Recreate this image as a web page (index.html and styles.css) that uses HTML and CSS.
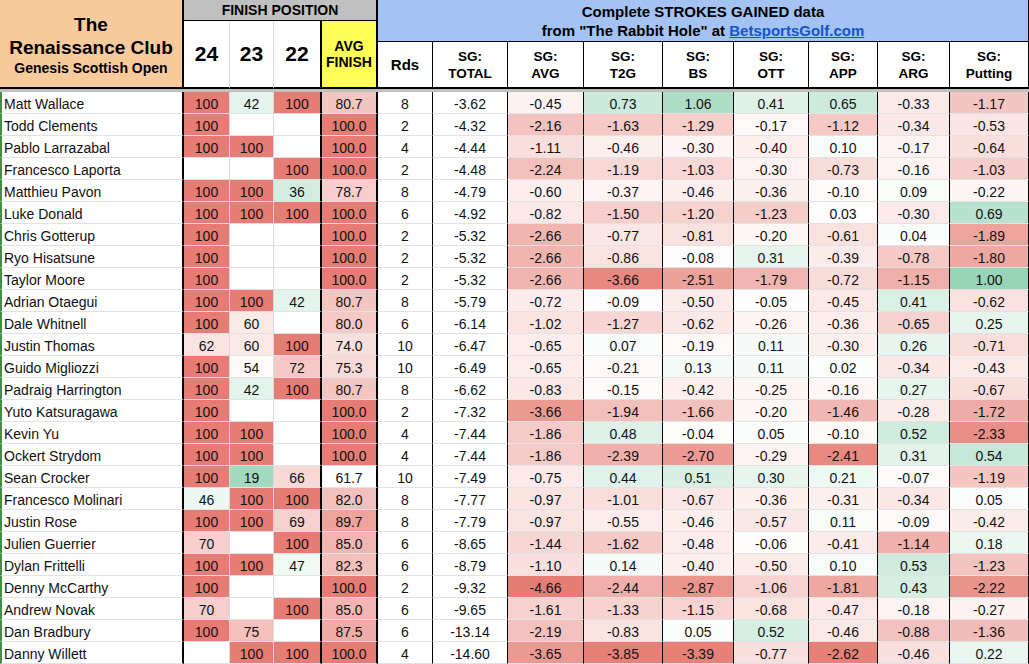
FILE: index.html
```html
<!DOCTYPE html>
<html lang="en">
<head>
<meta charset="utf-8">
<title>The Renaissance Club - Strokes Gained</title>
<link rel="stylesheet" href="styles.css">
</head>
<body>
<div class="sheet">
  <div class="head">
    <div class="title">
      <div class="t1">The</div>
      <div class="t1">Renaissance Club</div>
      <div class="t2">Genesis Scottish Open</div>
    </div>
    <div class="fp">FINISH POSITION</div>
    <div class="band">
      <div>Complete STROKES GAINED data</div>
      <div>from "The Rabbit Hole" at <a href="#">BetsportsGolf.com</a></div>
    </div>
    <div class="yr">24</div>
    <div class="yr">23</div>
    <div class="yr y22">22</div>
    <div class="avgh">AVG<br>FINISH</div>
    <div class="sgh rds">Rds</div>
    <div class="sgh">SG:<br>TOTAL</div>
    <div class="sgh">SG:<br>AVG</div>
    <div class="sgh">SG:<br>T2G</div>
    <div class="sgh">SG:<br>BS</div>
    <div class="sgh">SG:<br>OTT</div>
    <div class="sgh">SG:<br>APP</div>
    <div class="sgh">SG:<br>ARG</div>
    <div class="sgh">SG:<br>Putting</div>
  </div>
  <div class="freeze"></div>
  <div class="rows">
    <div class="row"><div>Matt Wallace</div><div>100</div><div>42</div><div>100</div><div>80.7</div><div>8</div><div>-3.62</div><div>-0.45</div><div>0.73</div><div>1.06</div><div>0.41</div><div>0.65</div><div>-0.33</div><div>-1.17</div></div>
    <div class="row"><div>Todd Clements</div><div>100</div><div></div><div></div><div>100.0</div><div>2</div><div>-4.32</div><div>-2.16</div><div>-1.63</div><div>-1.29</div><div>-0.17</div><div>-1.12</div><div>-0.34</div><div>-0.53</div></div>
    <div class="row"><div>Pablo Larrazabal</div><div>100</div><div>100</div><div></div><div>100.0</div><div>4</div><div>-4.44</div><div>-1.11</div><div>-0.46</div><div>-0.30</div><div>-0.40</div><div>0.10</div><div>-0.17</div><div>-0.64</div></div>
    <div class="row"><div>Francesco Laporta</div><div></div><div></div><div>100</div><div>100.0</div><div>2</div><div>-4.48</div><div>-2.24</div><div>-1.19</div><div>-1.03</div><div>-0.30</div><div>-0.73</div><div>-0.16</div><div>-1.03</div></div>
    <div class="row"><div>Matthieu Pavon</div><div>100</div><div>100</div><div>36</div><div>78.7</div><div>8</div><div>-4.79</div><div>-0.60</div><div>-0.37</div><div>-0.46</div><div>-0.36</div><div>-0.10</div><div>0.09</div><div>-0.22</div></div>
    <div class="row"><div>Luke Donald</div><div>100</div><div>100</div><div>100</div><div>100.0</div><div>6</div><div>-4.92</div><div>-0.82</div><div>-1.50</div><div>-1.20</div><div>-1.23</div><div>0.03</div><div>-0.30</div><div>0.69</div></div>
    <div class="row"><div>Chris Gotterup</div><div>100</div><div></div><div></div><div>100.0</div><div>2</div><div>-5.32</div><div>-2.66</div><div>-0.77</div><div>-0.81</div><div>-0.20</div><div>-0.61</div><div>0.04</div><div>-1.89</div></div>
    <div class="row"><div>Ryo Hisatsune</div><div>100</div><div></div><div></div><div>100.0</div><div>2</div><div>-5.32</div><div>-2.66</div><div>-0.86</div><div>-0.08</div><div>0.31</div><div>-0.39</div><div>-0.78</div><div>-1.80</div></div>
    <div class="row"><div>Taylor Moore</div><div>100</div><div></div><div></div><div>100.0</div><div>2</div><div>-5.32</div><div>-2.66</div><div>-3.66</div><div>-2.51</div><div>-1.79</div><div>-0.72</div><div>-1.15</div><div>1.00</div></div>
    <div class="row"><div>Adrian Otaegui</div><div>100</div><div>100</div><div>42</div><div>80.7</div><div>8</div><div>-5.79</div><div>-0.72</div><div>-0.09</div><div>-0.50</div><div>-0.05</div><div>-0.45</div><div>0.41</div><div>-0.62</div></div>
    <div class="row"><div>Dale Whitnell</div><div>100</div><div>60</div><div></div><div>80.0</div><div>6</div><div>-6.14</div><div>-1.02</div><div>-1.27</div><div>-0.62</div><div>-0.26</div><div>-0.36</div><div>-0.65</div><div>0.25</div></div>
    <div class="row"><div>Justin Thomas</div><div>62</div><div>60</div><div>100</div><div>74.0</div><div>10</div><div>-6.47</div><div>-0.65</div><div>0.07</div><div>-0.19</div><div>0.11</div><div>-0.30</div><div>0.26</div><div>-0.71</div></div>
    <div class="row"><div>Guido Migliozzi</div><div>100</div><div>54</div><div>72</div><div>75.3</div><div>10</div><div>-6.49</div><div>-0.65</div><div>-0.21</div><div>0.13</div><div>0.11</div><div>0.02</div><div>-0.34</div><div>-0.43</div></div>
    <div class="row"><div>Padraig Harrington</div><div>100</div><div>42</div><div>100</div><div>80.7</div><div>8</div><div>-6.62</div><div>-0.83</div><div>-0.15</div><div>-0.42</div><div>-0.25</div><div>-0.16</div><div>0.27</div><div>-0.67</div></div>
    <div class="row"><div>Yuto Katsuragawa</div><div>100</div><div></div><div></div><div>100.0</div><div>2</div><div>-7.32</div><div>-3.66</div><div>-1.94</div><div>-1.66</div><div>-0.20</div><div>-1.46</div><div>-0.28</div><div>-1.72</div></div>
    <div class="row"><div>Kevin Yu</div><div>100</div><div>100</div><div></div><div>100.0</div><div>4</div><div>-7.44</div><div>-1.86</div><div>0.48</div><div>-0.04</div><div>0.05</div><div>-0.10</div><div>0.52</div><div>-2.33</div></div>
    <div class="row"><div>Ockert Strydom</div><div>100</div><div>100</div><div></div><div>100.0</div><div>4</div><div>-7.44</div><div>-1.86</div><div>-2.39</div><div>-2.70</div><div>-0.29</div><div>-2.41</div><div>0.31</div><div>0.54</div></div>
    <div class="row"><div>Sean Crocker</div><div>100</div><div>19</div><div>66</div><div>61.7</div><div>10</div><div>-7.49</div><div>-0.75</div><div>0.44</div><div>0.51</div><div>0.30</div><div>0.21</div><div>-0.07</div><div>-1.19</div></div>
    <div class="row"><div>Francesco Molinari</div><div>46</div><div>100</div><div>100</div><div>82.0</div><div>8</div><div>-7.77</div><div>-0.97</div><div>-1.01</div><div>-0.67</div><div>-0.36</div><div>-0.31</div><div>-0.34</div><div>0.05</div></div>
    <div class="row"><div>Justin Rose</div><div>100</div><div>100</div><div>69</div><div>89.7</div><div>8</div><div>-7.79</div><div>-0.97</div><div>-0.55</div><div>-0.46</div><div>-0.57</div><div>0.11</div><div>-0.09</div><div>-0.42</div></div>
    <div class="row"><div>Julien Guerrier</div><div>70</div><div></div><div>100</div><div>85.0</div><div>6</div><div>-8.65</div><div>-1.44</div><div>-1.62</div><div>-0.48</div><div>-0.06</div><div>-0.41</div><div>-1.14</div><div>0.18</div></div>
    <div class="row"><div>Dylan Frittelli</div><div>100</div><div>100</div><div>47</div><div>82.3</div><div>6</div><div>-8.79</div><div>-1.10</div><div>0.14</div><div>-0.40</div><div>-0.50</div><div>0.10</div><div>0.53</div><div>-1.23</div></div>
    <div class="row"><div>Denny McCarthy</div><div>100</div><div></div><div></div><div>100.0</div><div>2</div><div>-9.32</div><div>-4.66</div><div>-2.44</div><div>-2.87</div><div>-1.06</div><div>-1.81</div><div>0.43</div><div>-2.22</div></div>
    <div class="row"><div>Andrew Novak</div><div>70</div><div></div><div>100</div><div>85.0</div><div>6</div><div>-9.65</div><div>-1.61</div><div>-1.33</div><div>-1.15</div><div>-0.68</div><div>-0.47</div><div>-0.18</div><div>-0.27</div></div>
    <div class="row"><div>Dan Bradbury</div><div>100</div><div>75</div><div></div><div>87.5</div><div>6</div><div>-13.14</div><div>-2.19</div><div>-0.83</div><div>0.05</div><div>0.52</div><div>-0.46</div><div>-0.88</div><div>-1.36</div></div>
    <div class="row"><div>Danny Willett</div><div></div><div>100</div><div>100</div><div>100.0</div><div>4</div><div>-14.60</div><div>-3.65</div><div>-3.85</div><div>-3.39</div><div>-0.77</div><div>-2.62</div><div>-0.46</div><div>0.22</div></div>
  </div>
</div>
<script src="script.js"></script>
</body>
</html>
```

FILE: styles.css
```css
:root {
  --cols: 184px 46px 44px 48px 56px 55px 75px 76px 79px 71px 75px 69px 72px 79px;
}

html, body {
  margin: 0;
  padding: 0;
  overflow: hidden;
  background: #fff;
}

body {
  font-family: "Liberation Sans", Arial, Helvetica, sans-serif;
  color: #111;
}

.sheet {
  width: 1029px;
}

.head {
  display: grid;
  grid-template-columns: var(--cols);
  grid-template-rows: 21px 21px 47px;
}

.head > div {
  box-sizing: border-box;
  display: flex;
  flex-direction: column;
  align-items: center;
  justify-content: center;
  text-align: center;
  font-weight: bold;
  color: #000;
}

.title {
  grid-column: 1;
  grid-row: 1 / 4;
  background: #f9cb9c;
  border-right: 2px solid #000;
  border-bottom: 2px solid #000;
  padding-top: 3px;
}

.t1 {
  font-size: 19px;
  line-height: 23px;
}

.t2 {
  font-size: 14px;
  line-height: 19px;
}

.fp {
  grid-column: 2 / 6;
  grid-row: 1;
  background: #c0c0c0;
  border-right: 2px solid #000;
  border-bottom: 1px solid #000;
  font-size: 14px;
  color: #1a1a1a;
}

.band {
  grid-column: 6 / 15;
  grid-row: 1 / 3;
  background: #a4c2f4;
  border-right: 1px solid #000;
  border-bottom: 1px solid #000;
  font-size: 15px;
  line-height: 19px;
}

.band a {
  color: #1155cc;
  text-decoration: underline;
}

.yr {
  grid-row: 2 / 4;
  background: #fff;
  font-size: 21px;
  border-right: 1px solid #dadada;
  border-bottom: 2px solid #000;
}

.head > .y22 {
  border-right: 2px solid #000;
}

.avgh {
  grid-row: 2 / 4;
  background: #ffff55;
  border-right: 2px solid #000;
  border-bottom: 2px solid #000;
  font-size: 14px;
  line-height: 16px;
}

.sgh {
  grid-row: 3;
  background: #fff;
  border-right: 1px solid #000;
  border-bottom: 2px solid #000;
  font-size: 13.5px;
  line-height: 17px;
}

.head > .rds {
  font-size: 15px;
}

.freeze {
  height: 3px;
  background: #bfbfbf;
}

.row {
  display: grid;
  grid-template-columns: var(--cols);
  height: 22px;
}

.row > div {
  box-sizing: border-box;
  height: 22px;
  display: flex;
  align-items: flex-end;
  justify-content: center;
  padding-bottom: 1px;
  border-bottom: 1px solid #e2e2e2;
  border-right: 1px solid #000;
  font-size: 14px;
  line-height: 16px;
  white-space: nowrap;
  background: #fff;
}

.row > div:nth-child(1) {
  justify-content: flex-start;
  border-left: 2px solid #3f8f45;
  border-right: 2px solid #000;
  padding-left: 2px;
}

.row > div:nth-child(2),
.row > div:nth-child(3) {
  border-right-color: #dadada;
}

.row > div:nth-child(4),
.row > div:nth-child(5) {
  border-right-width: 2px;
}
```

FILE: script.js
```js
(function () {
  var RED = [230, 124, 115];
  var GREEN = [87, 187, 138];

  function mix(c, t) {
    t = Math.max(0, Math.min(1, t));
    var r = Math.round(255 + (c[0] - 255) * t);
    var g = Math.round(255 + (c[1] - 255) * t);
    var b = Math.round(255 + (c[2] - 255) * t);
    return 'rgb(' + r + ',' + g + ',' + b + ')';
  }

  // column index (0-based) -> value giving full red / full green
  var redScale = { 7: 4.7, 8: 4.0, 9: 3.5, 10: 3.2, 11: 2.7, 12: 1.9, 13: 2.7 };
  var greenScale = { 7: 1, 8: 2.4, 9: 2.2, 10: 2.1, 11: 2.2, 12: 1.8, 13: 1.6 };

  var rows = document.querySelectorAll('.row');
  rows.forEach(function (row) {
    var cells = row.children;
    for (var i = 1; i < cells.length; i++) {
      var txt = cells[i].textContent.trim();
      if (!txt) continue;
      var v = parseFloat(txt);
      var bg = null;
      if (i >= 1 && i <= 3) {
        bg = v >= 52 ? mix(RED, (v - 52) / 48) : mix(GREEN, (52 - v) / 60);
      } else if (i === 4) {
        bg = mix(RED, (v - 66) / 34);
      } else if (i >= 7) {
        bg = v < 0 ? mix(RED, -v / redScale[i]) : mix(GREEN, v / greenScale[i]);
      }
      if (bg) cells[i].style.backgroundColor = bg;
    }
  });
})();
```
